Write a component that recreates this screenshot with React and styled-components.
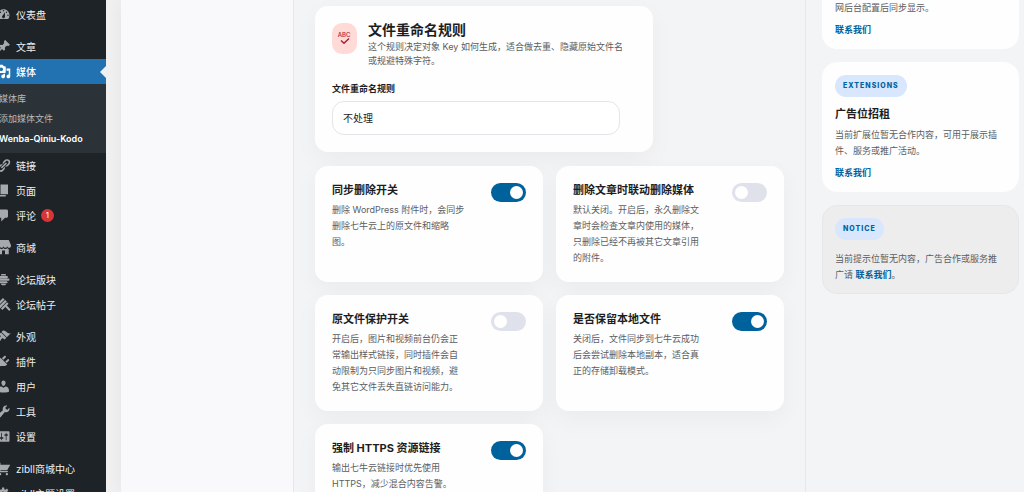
// App.jsx
import React, { useState } from 'react';
import styled, { createGlobalStyle } from 'styled-components';

const GlobalStyle = createGlobalStyle`
  * {
    box-sizing: border-box;
  }

  body {
    margin: 0;
    background: #f0f0f1;
    color: #1d1d1f;
    font-family: Inter, 'Noto Sans CJK SC', sans-serif;
    font-size: 9px;
  }
`;

const Shell = styled.div`
  display: flex;
  height: 100vh;
  overflow: hidden;
`;

/* Admin menu */

const Sidebar = styled.nav`
  flex: none;
  width: 114px;
  margin-left: -8px;
  padding-top: 2px;
  background: #1d2327;
`;

const MenuList = styled.ul`
  margin: 0;
  padding: 0;
  list-style: none;
`;

const MenuItem = styled.li`
  margin-top: ${(props) => (props.$spaced ? '7px' : '0')};
`;

const MenuLink = styled.a`
  display: flex;
  align-items: center;
  height: 25px;
  padding-left: 4px;
  background: ${(props) => (props.$active ? '#2271b1' : 'transparent')};
  color: ${(props) => (props.$active ? '#fff' : '#f0f0f1')};
  font-size: 10px;
  font-weight: ${(props) => (props.$active ? 500 : 400)};
  text-decoration: none;
  white-space: nowrap;
`;

const MenuIcon = styled.svg`
  flex: none;
  width: 15px;
  height: 15px;
  margin-right: 5px;
  fill: ${(props) => (props.$active ? '#fff' : '#a7aaad')};
`;

const Arrow = styled.span`
  margin-left: auto;
  border: 6px solid transparent;
  border-left-width: 0;
  border-right-color: #f0f0f1;
`;

const Count = styled.span`
  width: 13px;
  height: 13px;
  margin-left: 5px;
  border-radius: 50%;
  background: #d63638;
  color: #fff;
  font-size: 8px;
  line-height: 13px;
  text-align: center;
`;

const SubMenu = styled.ul`
  margin: 0;
  padding: 5px 0 4px 7px;
  background: #2c3338;
  list-style: none;
`;

const SubLink = styled.a`
  display: block;
  color: ${(props) => (props.$current ? '#fff' : '#b4b9be')};
  font-size: 9px;
  font-weight: ${(props) => (props.$current ? 600 : 400)};
  line-height: 20px;
  text-decoration: none;
  white-space: nowrap;
`;

/* Plugin page */

const Page = styled.div`
  display: flex;
  flex: 1;
  min-width: 0;
  margin-left: 15px;
  background: #f3f4f6;
  box-shadow: 0 0 15px rgba(0, 0, 0, 0.05);
`;

const NavColumn = styled.div`
  flex: none;
  width: 173px;
  border-right: 1px solid #e6e7ea;
  background: #f9f9fb;
`;

const Main = styled.main`
  flex: 1;
  min-width: 0;
  padding: 6px 21px;
`;

const Panel = styled.section`
  width: 72%;
  min-height: 146px;
  margin-bottom: 14px;
  padding: 15px 17px;
  border-radius: 13px;
  background: #fefefe;
  box-shadow: 0 8px 24px rgba(0, 0, 0, 0.04);
`;

const PanelHead = styled.header`
  display: flex;
  gap: 11px;
`;

const Badge = styled.span`
  flex: none;
  display: flex;
  align-items: center;
  justify-content: center;
  width: 25px;
  height: 31px;
  margin-top: 2px;
  border-radius: 10px;
  background: #ffdad6;
`;

const PanelTitle = styled.h2`
  margin: 0;
  font-size: 14px;
  font-weight: 700;
  line-height: 17px;
`;

const PanelText = styled.p`
  margin: 2px 0 0;
  color: #5c5d61;
  font-size: 9px;
  line-height: 14px;
`;

const FieldLabel = styled.label`
  display: block;
  margin: 14px 0 5px;
  font-size: 9px;
  font-weight: 700;
  line-height: 14px;
`;

const Select = styled.select`
  display: block;
  appearance: none;
  width: 95%;
  height: 34px;
  padding: 0 10px;
  border: 1px solid #e4e5e8;
  border-radius: 12px;
  background: #fff;
  color: #1d1d1f;
  font-family: inherit;
  font-size: 10px;
`;

const Grid = styled.div`
  display: grid;
  grid-template-columns: 1fr 1fr;
  grid-auto-rows: 116px;
  gap: 13px;
`;

const SwitchCard = styled.section`
  display: flex;
  justify-content: space-between;
  padding: 16px 17px;
  border-radius: 13px;
  background: #fefefe;
  box-shadow: 0 8px 24px rgba(0, 0, 0, 0.04);
`;

const SwitchTitle = styled.label`
  display: block;
  font-size: 11px;
  font-weight: 700;
  line-height: 16px;
  white-space: nowrap;
`;

const SwitchText = styled.p`
  margin: 4px 0 0;
  color: #5c5d61;
  font-size: 9px;
  line-height: 16px;
  white-space: pre-line;
`;

const Toggle = styled.input`
  flex: none;
  appearance: none;
  display: flex;
  align-items: center;
  width: 35px;
  height: 19px;
  margin: 1px 0 0;
  padding: 0 3px;
  border-radius: 10px;
  background: #dfe2eb;
  cursor: pointer;

  &::before {
    content: '';
    width: 13px;
    height: 13px;
    border-radius: 50%;
    background: #fff;
  }

  &:checked {
    justify-content: flex-end;
    background: #00629d;
  }
`;

const Aside = styled.aside`
  flex: none;
  display: flex;
  flex-direction: column;
  gap: 13px;
  width: 219px;
  padding: 0 5px 0 16px;
  border-left: 1px solid #e6e7ea;
`;

const AdCard = styled.section`
  padding: ${(props) => (props.$cut ? '0 12px 10px' : '12px 12px 10px')};
  border: 1px solid ${(props) => (props.$muted ? '#e6e7e9' : '#fefefe')};
  border-top-width: ${(props) => (props.$cut ? '0' : '1px')};
  border-radius: ${(props) => (props.$cut ? '0 0 15px 15px' : '15px')};
  background: ${(props) => (props.$muted ? '#ededee' : '#fefefe')};
`;

const Tag = styled.span`
  display: inline-block;
  padding: 0 8px;
  border-radius: 11px;
  background: #d8e7fd;
  color: #00629d;
  font-size: 7px;
  font-weight: 800;
  letter-spacing: 1px;
  line-height: 22px;
`;

const AdTitle = styled.h3`
  margin: 9px 0 5px;
  font-size: 11px;
  font-weight: 700;
  line-height: 16px;
`;

const AdText = styled.p`
  margin: ${(props) => (props.$spaced ? '11px 0 0' : '0')};
  color: #5c5d61;
  font-size: 9px;
  line-height: 16px;
  white-space: pre-line;
`;

const AdLink = styled.a`
  color: #00629d;
  font-size: 9px;
  font-weight: 700;
  line-height: 16px;
  text-decoration: none;
`;

const AdAction = styled.div`
  margin-top: 6px;
`;

const icons = {
  dashboard:
    'M3.76 16h12.48c1.1-1.37 1.76-3.11 1.76-5 0-4.42-3.58-8-8-8s-8 3.58-8 8c0 1.89.66 3.63 1.76 5zM10 4c.55 0 1 .45 1 1s-.45 1-1 1-1-.45-1-1 .45-1 1-1zM6 6c.55 0 1 .45 1 1s-.45 1-1 1-1-.45-1-1 .45-1 1-1zm8 0c.55 0 1 .45 1 1s-.45 1-1 1-1-.45-1-1 .45-1 1-1zm-5.37 5.55L12 7v6c0 1.1-.9 2-2 2s-2-.9-2-2c0-.57.24-1.08.63-1.45zM4 10c.55 0 1 .45 1 1s-.45 1-1 1-1-.45-1-1 .45-1 1-1zm12 0c.55 0 1 .45 1 1s-.45 1-1 1-1-.45-1-1 .45-1 1-1z',
  pin: 'M10.44 3.02l1.82-1.82 6.36 6.35-1.83 1.82c-1.05-.68-2.48-.57-3.41.36l-.75.75c-.92.93-1.04 2.35-.35 3.41l-1.83 1.82-2.41-2.41-2.8 2.79c-.42.42-3.38 2.71-3.8 2.29s1.86-3.39 2.28-3.81l2.79-2.79L4.1 9.36l1.83-1.82c1.05.69 2.48.57 3.4-.36l.75-.75c.93-.92 1.05-2.35.36-3.41z',
  media:
    'M13 11V4c0-.55-.45-1-1-1h-1.67L9 1H5L3.67 3H2c-.55 0-1 .45-1 1v7c0 .55.45 1 1 1h10c.55 0 1-.45 1-1zM7 4.5c1.38 0 2.5 1.12 2.5 2.5S8.38 9.5 7 9.5 4.5 8.38 4.5 7 5.62 4.5 7 4.5zM14 6h5v10.5c0 1.38-1.12 2.5-2.5 2.5S14 17.88 14 16.5s1.12-2.5 2.5-2.5c.17 0 .34.02.5.05V9h-3V6zm-4 8.05V13h2v3.5c0 1.38-1.12 2.5-2.5 2.5S7 17.88 7 16.5 8.12 14 9.5 14c.17 0 .34.02.5.05z',
  link: 'M17.74 2.76c1.68 1.69 1.68 4.41 0 6.1l-1.53 1.52c-1.12 1.12-2.7 1.47-4.14 1.09l2.62-2.61.76-.77.76-.76c.84-.84.84-2.2 0-3.04-.84-.85-2.2-.85-3.04 0l-.77.76-3.38 3.38c-.37-1.44-.02-3.02 1.1-4.14l1.52-1.53c1.69-1.68 4.42-1.68 6.1 0zM8.59 13.43l5.34-5.34c.42-.42.42-1.1 0-1.52-.44-.43-1.13-.39-1.53 0l-5.33 5.34c-.42.42-.42 1.1 0 1.52.44.43 1.13.39 1.52 0zm-.76 2.29l4.14-4.15c.38 1.44.03 3.02-1.09 4.14l-1.52 1.53c-1.69 1.68-4.41 1.68-6.1 0-1.68-1.68-1.68-4.42 0-6.1l1.53-1.52c1.12-1.12 2.7-1.47 4.14-1.1l-4.14 4.15c-.85.84-.85 2.2 0 3.05.84.84 2.2.84 3.04 0z',
  page: 'M6 15V2h10v13H6zm-1 1h8v2H3V5h2v11z',
  comment:
    'M5 2h9c1.1 0 2 .9 2 2v7c0 1.1-.9 2-2 2h-2l-5 5v-5H5c-1.1 0-2-.9-2-2V4c0-1.1.9-2 2-2z',
  store:
    'M1 10c.41.29.96.43 1.5.43.55 0 1.09-.14 1.5-.43.62-.46 1-1.17 1-2 0 .83.37 1.54 1 2 .41.29.96.43 1.5.43.55 0 1.09-.14 1.5-.43.62-.46 1-1.17 1-2 0 .83.37 1.54 1 2 .41.29.96.43 1.51.43.54 0 1.08-.14 1.49-.43.62-.46 1-1.17 1-2 0 .83.37 1.54 1 2 .41.29.96.43 1.5.43.55 0 1.09-.14 1.5-.43.63-.46 1-1.17 1-2V7l-3-7H4L0 7v1c0 .83.37 1.54 1 2zm2 8.99h5v-5h4v5h5v-7c-.37-.05-.72-.22-1-.43-.63-.45-1-.73-1-1.56 0 .83-.38 1.11-1 1.56-.41.3-.95.43-1.49.44-.55 0-1.1-.14-1.51-.44-.63-.45-1-.73-1-1.56 0 .83-.38 1.11-1 1.56-.41.3-.95.43-1.5.44-.54 0-1.09-.14-1.5-.44-.63-.45-1-.73-1-1.57 0 .84-.38 1.12-1 1.57-.29.21-.63.38-1 .44v6.99z',
  forums:
    'M8 2.5h4a1.500 1.500 0 0 1 1 2.300H7a1.500 1.500 0 0 1 1-2.300zM5.500 5.300h9a1.500 1.500 0 0 1 0 3h-9a1.500 1.500 0 0 1 0-3zM3.500 8.800h13a1.500 1.500 0 0 1 0 3h-13a1.500 1.500 0 0 1 0-3zM5.500 12.300h9a1.500 1.500 0 0 1 0 2.800h-9a1.500 1.500 0 0 1 0-2.800zM7 15.600h6a1.500 1.500 0 0 1-1.500 2.200h-3A1.500 1.500 0 0 1 7 15.600z',
  topics:
    'M9.300 1.300l2.100 2.100-8.300 8.300-2.100-2.100zM12.200 3.900l2.200 2.200-9.500 9.500-2.200-2.200zM14.700 7.100l2 2-8.200 8.200-2-2zM12.500 13.200l2-2 5 5.400-1.900 1.900z',
  appearance:
    'M14.48 11.06L7.41 3.99l1.5-1.5c.5-.56 2.3-.47 3.51.32 1.21.8 1.43 1.28 2.91 2.1 1.18.64 2.45 1.26 4.45.85zm-.71.71L6.7 4.7 4.93 6.47c-.39.39-.39 1.02 0 1.41l1.06 1.06c.39.39.39 1.03 0 1.42-.6.6-1.43 1.11-2.21 1.69-.35.26-.7.53-1.01.84C1.43 14.23.4 16.08 1.4 17.07c.99 1 2.84-.03 4.18-1.36.31-.31.58-.66.85-1.02.57-.78 1.08-1.61 1.69-2.21.39-.39 1.02-.39 1.41 0l1.06 1.06c.39.39 1.02.39 1.41 0z',
  plugins:
    'M13.11 4.36L9.87 7.6 8 5.73l3.24-3.24c.35-.34 1.05-.2 1.56.32.52.51.66 1.21.31 1.55zm-8 1.77l.91-1.12 9.01 9.01-1.19.84c-.71.71-2.63 1.16-3.82 1.16H6.14L4.9 17.26c-.59.59-1.54.59-2.12 0-.59-.58-.59-1.53 0-2.12l1.24-1.24v-3.88c0-1.13.4-3.19 1.09-3.89zm7.26 3.97l3.24-3.24c.34-.35 1.04-.21 1.55.31.52.51.66 1.21.31 1.55l-3.24 3.25z',
  users:
    'M10 9.25c-2.27 0-2.73-3.44-2.73-3.44C7 4.02 7.82 2 9.97 2c2.16 0 2.98 2.02 2.71 3.81 0 0-.41 3.44-2.68 3.44zm0 2.57L12.72 10c2.39 0 4.52 2.33 4.52 4.53v2.49s-3.65 1.13-7.24 1.13c-3.65 0-7.24-1.13-7.24-1.13v-2.49c0-2.25 1.94-4.48 4.47-4.48z',
  tools:
    'M16.68 9.77c-1.34 1.34-3.3 1.67-4.95.99l-5.41 6.52c-.99.99-2.59.99-3.58 0s-.99-2.59 0-3.57l6.52-5.42c-.68-1.65-.35-3.61.99-4.95 1.28-1.28 3.12-1.62 4.72-1.06l-2.89 2.89 2.82 2.82 2.86-2.87c.53 1.58.18 3.39-1.08 4.65zM3.81 16.21c.4.39 1.04.39 1.43 0 .4-.4.4-1.04 0-1.43-.39-.4-1.03-.4-1.43 0-.39.39-.39 1.03 0 1.43z',
  settings:
    'M18 16V4c0-.55-.45-1-1-1H3c-.55 0-1 .45-1 1v12c0 .55.45 1 1 1h14c.55 0 1-.45 1-1zM8 11h1c.55 0 1 .45 1 1s-.45 1-1 1H8v1.5c0 .28-.22.5-.5.5s-.5-.22-.5-.5V13H6c-.55 0-1-.45-1-1s.45-1 1-1h1V5.5c0-.28.22-.5.5-.5s.5.22.5.5V11zm5-2h-1c-.55 0-1-.45-1-1s.45-1 1-1h1V5.5c0-.28.22-.5.5-.5s.5.22.5.5V7h1c.55 0 1 .45 1 1s-.45 1-1 1h-1v5.5c0 .28-.22.5-.5.5s-.5-.22-.5-.5V9z',
  cart: 'M6 13h9c.55 0 1 .45 1 1s-.45 1-1 1H5c-.55 0-1-.45-1-1V4H2c-.55 0-1-.45-1-1s.45-1 1-1h3c.55 0 1 .45 1 1v2h13l-4 7H6v1zm-.5 3c.83 0 1.5.67 1.5 1.5S6.33 19 5.5 19 4 18.33 4 17.5 4.67 16 5.5 16zm9 0c.83 0 1.5.67 1.5 1.5s-.67 1.5-1.5 1.5-1.5-.67-1.5-1.5.67-1.5 1.5-1.5z',
  gear: 'M18 12h-2.180c-.17.700-.44 1.350-.81 1.930l1.540 1.540-2.100 2.100-1.540-1.540c-.58.360-1.230.630-1.910.790V19H8v-2.180c-.68-.16-1.330-.43-1.910-.79l-1.540 1.540-2.120-2.120 1.540-1.540c-.36-.58-.63-1.230-.79-1.910H1V9.030h2.170c.16-.7.440-1.350.8-1.940L2.430 5.550l2.100-2.100 1.540 1.540c.58-.37 1.240-.64 1.930-.81V2h3v2.180c.68.160 1.330.430 1.910.790l1.540-1.540 2.120 2.120-1.540 1.540c.36.590.640 1.240.8 1.940H18V12zm-8.500 1.500c1.660 0 3-1.340 3-3s-1.340-3-3-3-3 1.340-3 3 1.340 3 3 3z',
};

const menu = [
  { icon: 'dashboard', label: '仪表盘' },
  { icon: 'pin', label: '文章', spaced: true },
  {
    icon: 'media',
    label: '媒体',
    active: true,
    children: ['媒体库', '添加媒体文件', 'Wenba-Qiniu-Kodo'],
  },
  { icon: 'link', label: '链接' },
  { icon: 'page', label: '页面' },
  { icon: 'comment', label: '评论', count: 1 },
  { icon: 'store', label: '商城', spaced: true },
  { icon: 'forums', label: '论坛版块', spaced: true },
  { icon: 'topics', label: '论坛帖子' },
  { icon: 'appearance', label: '外观', spaced: true },
  { icon: 'plugins', label: '插件' },
  { icon: 'users', label: '用户' },
  { icon: 'tools', label: '工具' },
  { icon: 'settings', label: '设置' },
  { icon: 'cart', label: 'zibll商城中心', spaced: true },
  { icon: 'gear', label: 'zibll主题设置' },
];

const switches = [
  {
    id: 'sync-delete',
    title: '同步删除开关',
    text: '删除 WordPress 附件时，会同步\n删除七牛云上的原文件和缩略\n图。',
    on: true,
  },
  {
    id: 'post-delete',
    title: '删除文章时联动删除媒体',
    text: '默认关闭。开启后，永久删除文\n章时会检查文章内使用的媒体，\n只删除已经不再被其它文章引用\n的附件。',
    on: false,
  },
  {
    id: 'protect',
    title: '原文件保护开关',
    text: '开启后，图片和视频前台仍会正\n常输出样式链接，同时插件会自\n动限制为只同步图片和视频，避\n免其它文件丢失直链访问能力。',
    on: false,
  },
  {
    id: 'keep-local',
    title: '是否保留本地文件',
    text: '关闭后，文件同步到七牛云成功\n后会尝试删除本地副本，适合真\n正的存储卸载模式。',
    on: true,
  },
  {
    id: 'force-https',
    title: '强制 HTTPS 资源链接',
    text: '输出七牛云链接时优先使用\nHTTPS，减少混合内容告警。',
    on: true,
  },
];

const AdminMenu = () => (
  <Sidebar>
    <MenuList>
      {menu.map((item) => (
        <MenuItem key={item.label} $spaced={item.spaced}>
          <MenuLink href="#" $active={item.active}>
            <MenuIcon viewBox="0 0 20 20" $active={item.active} aria-hidden="true">
              <path fillRule="evenodd" d={icons[item.icon]} />
            </MenuIcon>
            {item.label}
            {item.count && <Count>{item.count}</Count>}
            {item.active && <Arrow />}
          </MenuLink>
          {item.children && (
            <SubMenu>
              {item.children.map((child, i) => (
                <li key={child}>
                  <SubLink href="#" $current={i === item.children.length - 1}>
                    {child}
                  </SubLink>
                </li>
              ))}
            </SubMenu>
          )}
        </MenuItem>
      ))}
    </MenuList>
  </Sidebar>
);

const SpellIcon = () => (
  <svg width="15" height="15" viewBox="0 0 15 15" aria-hidden="true">
    <text x="7" y="6" fill="#a8203a" fontSize="6" fontWeight="500" textAnchor="middle">
      ABC
    </text>
    <path d="M4 9.500l3 2.700 5-4.700" fill="none" stroke="#a8203a" strokeWidth="1.500" />
  </svg>
);

const App = () => {
  const [rule, setRule] = useState('none');
  const [values, setValues] = useState(
    Object.fromEntries(switches.map((item) => [item.id, item.on]))
  );

  const handleToggle = (id) => {
    setValues({ ...values, [id]: !values[id] });
  };

  return (
    <Shell>
      <GlobalStyle />
      <AdminMenu />
      <Page>
        <NavColumn />
        <Main>
          <Panel>
            <PanelHead>
              <Badge>
                <SpellIcon />
              </Badge>
              <div>
                <PanelTitle>文件重命名规则</PanelTitle>
                <PanelText>
                  这个规则决定对象 Key 如何生成，适合做去重、隐藏原始文件名
                  <br />
                  或规避特殊字符。
                </PanelText>
              </div>
            </PanelHead>
            <FieldLabel htmlFor="rename-rule">文件重命名规则</FieldLabel>
            <Select id="rename-rule" value={rule} onChange={(e) => setRule(e.target.value)}>
              <option value="none">不处理</option>
            </Select>
          </Panel>
          <Grid>
            {switches.map((item) => (
              <SwitchCard key={item.id}>
                <div>
                  <SwitchTitle htmlFor={item.id}>{item.title}</SwitchTitle>
                  <SwitchText>{item.text}</SwitchText>
                </div>
                <Toggle
                  id={item.id}
                  type="checkbox"
                  role="switch"
                  checked={values[item.id]}
                  onChange={() => handleToggle(item.id)}
                />
              </SwitchCard>
            ))}
          </Grid>
        </Main>
        <Aside>
          <AdCard $cut>
            <AdText>网后台配置后同步显示。</AdText>
            <AdAction>
              <AdLink href="#">联系我们</AdLink>
            </AdAction>
          </AdCard>
          <AdCard>
            <Tag>EXTENSIONS</Tag>
            <AdTitle>广告位招租</AdTitle>
            <AdText>{'当前扩展位暂无合作内容，可用于展示插\n件、服务或推广活动。'}</AdText>
            <AdAction>
              <AdLink href="#">联系我们</AdLink>
            </AdAction>
          </AdCard>
          <AdCard $muted>
            <Tag>NOTICE</Tag>
            <AdText $spaced>
              {'当前提示位暂无内容，广告合作或服务推\n广请 '}
              <AdLink href="#">联系我们</AdLink>。
            </AdText>
          </AdCard>
        </Aside>
      </Page>
    </Shell>
  );
};

export default App;
